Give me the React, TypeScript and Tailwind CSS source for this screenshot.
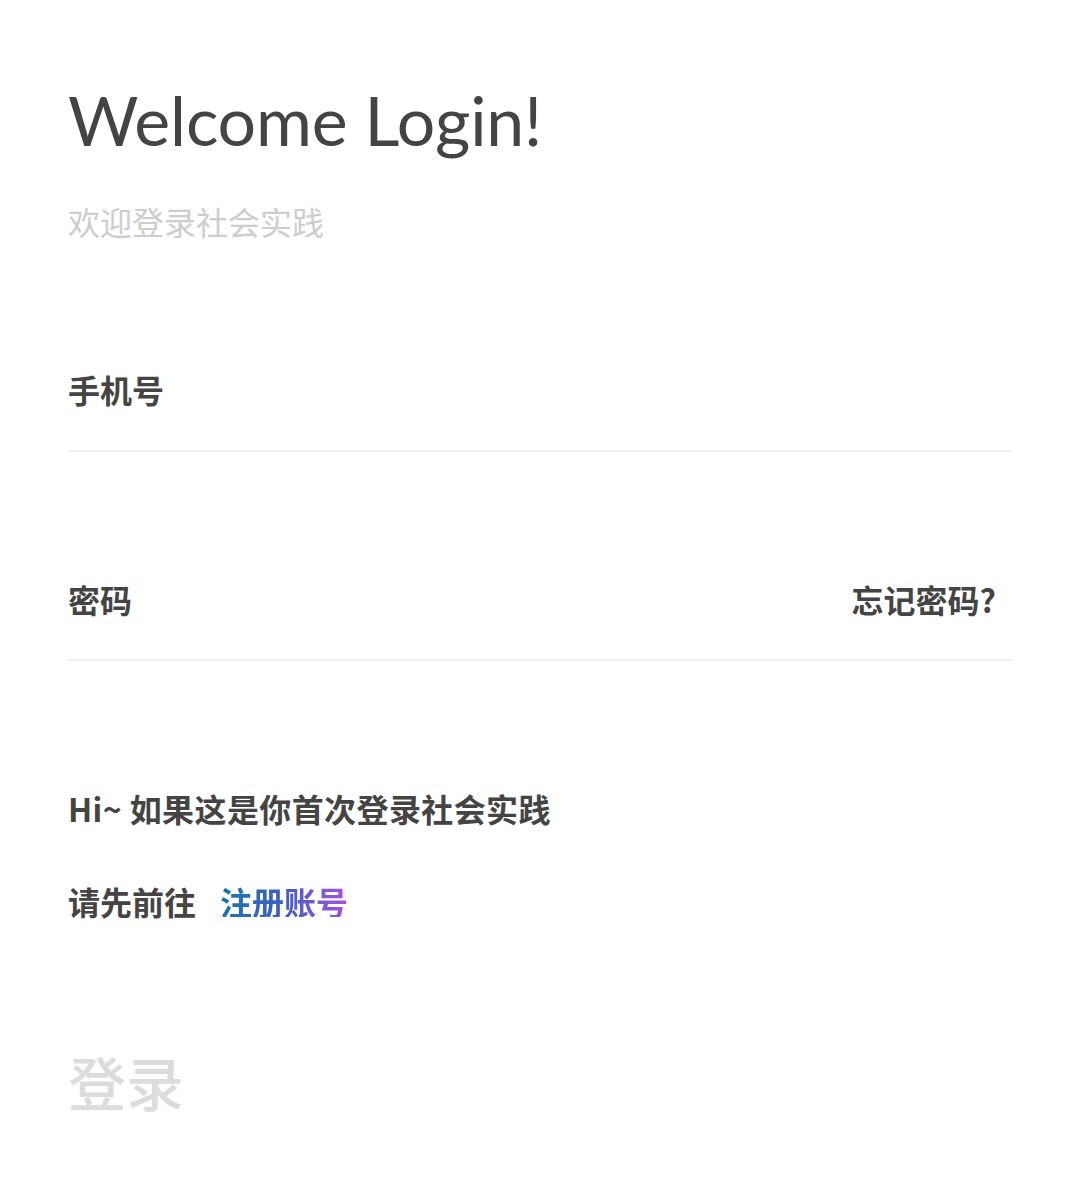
import React from "react";

const cjk = {
  fontFamily: '"Noto Sans CJK SC", "Noto Sans", sans-serif',
};

export default function App() {
  return (
    <div
      className="min-h-[1178px] w-full bg-white px-[68px] pt-[86px] text-[#444]"
      style={cjk}
    >
      <h1
        className="text-[68px] leading-none font-normal tracking-[-0.2px] text-[#444]"
        style={{ fontFamily: 'Lato, "Noto Sans CJK SC", sans-serif' }}
      >
        Welcome Login!
      </h1>
      <p className="mt-[51px] text-[32px] leading-[32px] text-[#cdcdcd]">
        欢迎登录社会实践
      </p>

      <div className="mt-[136px] border-b-2 border-[#f0f0f0] pb-[45px]">
        <label className="block text-[32px] leading-[32px] font-bold">
          手机号
        </label>
      </div>

      <div className="mt-[131px] flex items-center justify-between border-b-2 border-[#f0f0f0] pb-[44px] pr-[16px]">
        <label className="text-[32px] leading-[32px] font-bold">密码</label>
        <button type="button" className="text-[32px] leading-[32px] font-bold text-[#444]">
          忘记密码?
        </button>
      </div>

      <p className="mt-[131px] text-[32px] leading-[32px] font-bold tracking-[0.4px]">
        Hi~ 如果这是你首次登录社会实践
      </p>

      <p className="mt-[61px] flex items-center text-[32px] leading-[32px] font-bold">
        <span>请先前往</span>
        <a
          href="#"
          className="ml-[24px] bg-gradient-to-r from-[#0f76ae] via-[#3d5cc4] to-[#a54ee0] bg-clip-text text-transparent"
        >
          注册账号
        </a>
      </p>

      <button
        type="button"
        className="mt-[135px] text-[58px] leading-[58px] font-medium text-[#dcdcdc]"
      >
        登录
      </button>
    </div>
  );
}
